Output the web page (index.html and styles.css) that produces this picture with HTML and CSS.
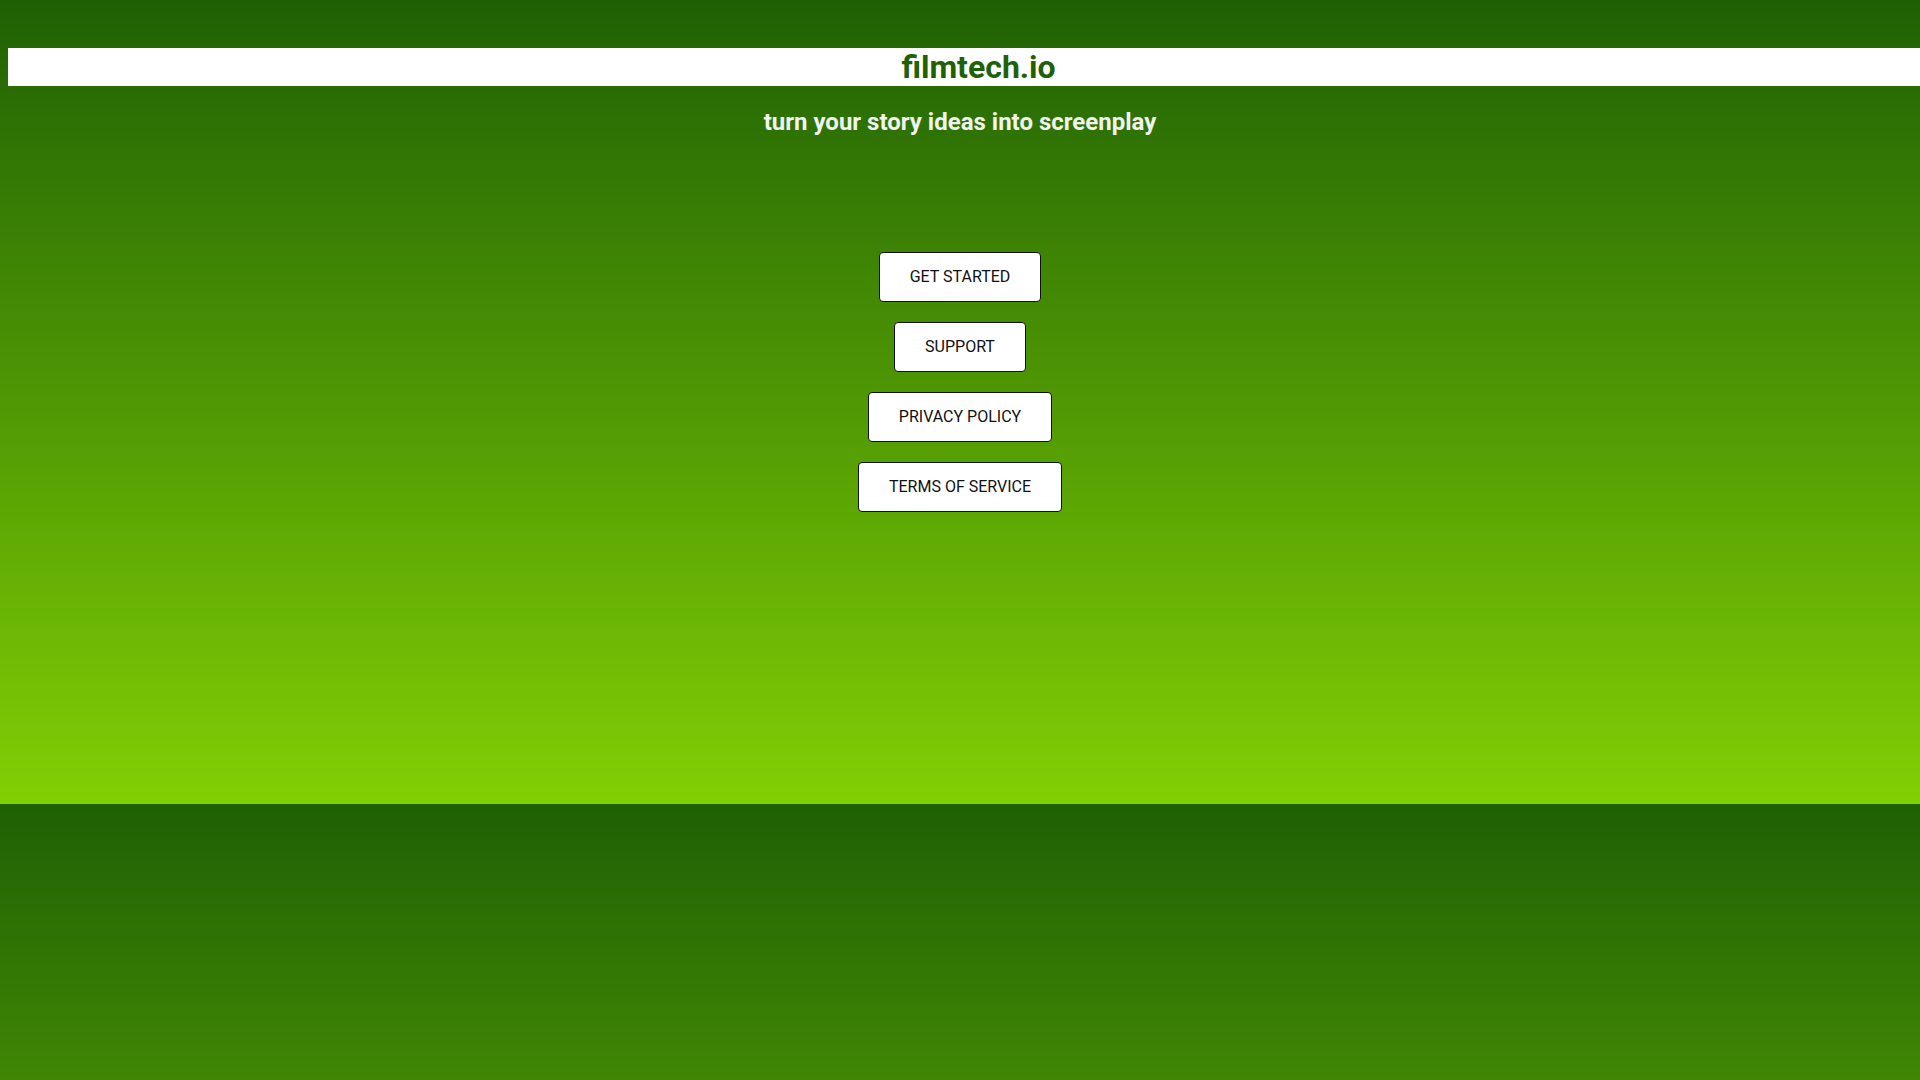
FILE: index.html
```html
<!DOCTYPE html>
<html lang="en">
<head>
<meta charset="utf-8">
<title>filmtech.io</title>
<link rel="stylesheet" href="styles.css">
</head>
<body>
<header class="masthead">
  <h1 class="brand">filmtech.io</h1>
  <h2 class="tagline">turn your story ideas into screenplay</h2>
</header>
<nav class="actions">
  <button class="btn" type="button">GET STARTED</button>
  <button class="btn" type="button">SUPPORT</button>
  <button class="btn" type="button">PRIVACY POLICY</button>
  <button class="btn" type="button">TERMS OF SERVICE</button>
</nav>
</body>
</html>
```

FILE: styles.css
```css
html {
  background: linear-gradient(to bottom, #1f6004 0%, #81d004 100%);
  background-size: 100% 804px;
  background-repeat: repeat;
  min-height: 100%;
}

body {
  margin: 0;
  padding: 48px 0 0 8px;
  font-family: Roboto, "Liberation Sans", Arial, sans-serif;
}

.masthead {
  display: flex;
  flex-direction: column;
}

.brand {
  margin: 0;
  padding-left: 29px;
  background: #ffffff;
  color: #1f6106;
  font-size: 32px;
  font-weight: 700;
  line-height: 38px;
  text-align: center;
}

.tagline {
  margin: 22px 8px 0 0;
  color: #f1f4ee;
  font-size: 24px;
  font-weight: 700;
  line-height: 28px;
  text-align: center;
}

.actions {
  display: flex;
  flex-direction: column;
  align-items: center;
  gap: 20px;
  margin: 116px 8px 0 0;
}

.btn {
  font-family: Roboto, "Liberation Sans", Arial, sans-serif;
  font-size: 16px;
  line-height: 18px;
  color: #111111;
  background: #ffffff;
  border: 1px solid #111111;
  border-radius: 4px;
  padding: 15px 30px;
  cursor: pointer;
}
```
